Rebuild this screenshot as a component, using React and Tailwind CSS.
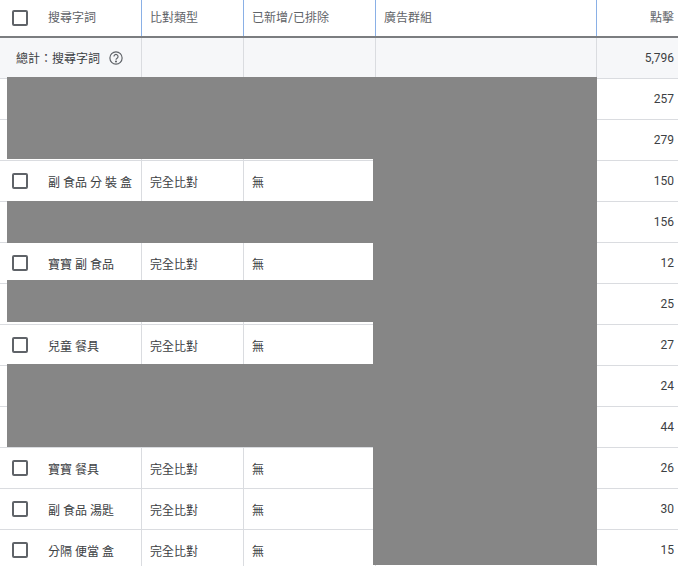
const rows = [
  { term: "", clicks: "257" },
  { term: "", clicks: "279" },
  { term: "副 食品 分 裝 盒", clicks: "150" },
  { term: "", clicks: "156" },
  { term: "寶寶 副 食品", clicks: "12" },
  { term: "", clicks: "25" },
  { term: "兒童 餐具", clicks: "27" },
  { term: "", clicks: "24" },
  { term: "", clicks: "44" },
  { term: "寶寶 餐具", clicks: "26" },
  { term: "副 食品 湯匙", clicks: "30" },
  { term: "分隔 便當 盒", clicks: "15" },
];

// grey blocks that hide parts of the table in the screenshot
const redactions = [
  "left-[7px] top-[77px] w-[590px] h-[82px]",
  "left-[7px] top-[201px] w-[590px] h-[42px]",
  "left-[7px] top-[280px] w-[590px] h-[42px]",
  "left-[7px] top-[364px] w-[590px] h-[83px]",
  "left-[373px] top-[77px] w-[224px] h-[488px]",
];

function Checkbox() {
  return <div className="w-4 h-4 rounded-[2px] border-2 border-[#5f6368] bg-white" />;
}

export default function App() {
  return (
    <div className="relative w-[678px] h-[566px] overflow-hidden bg-white text-xs text-[#3c4043] font-['Roboto','Noto_Sans_CJK_TC',sans-serif]">
      <div className="flex h-[38px] border-b-2 border-[#7b7d80] text-[#5f6368]">
        <div className="w-[142px] flex items-center pl-3 border-r border-[#8ab0e6]">
          <Checkbox />
          <span className="ml-5">搜尋字詞</span>
        </div>
        <div className="w-[102px] flex items-center pl-2 border-r border-[#8ab0e6]">比對類型</div>
        <div className="w-[132px] flex items-center pl-2 border-r border-[#8ab0e6]">已新增/已排除</div>
        <div className="w-[221px] flex items-center pl-2 border-r border-[#8ab0e6]">廣告群組</div>
        <div className="flex-1 flex items-center justify-end pr-1">點擊</div>
      </div>

      <div className="flex h-10 bg-[#f6f7f9]">
        <div className="w-[142px] flex items-center pl-4 border-r border-[#dadce0]">
          <span className="pt-[2px]">總計：搜尋字詞</span>
          <svg className="ml-[9px] w-[14px] h-[14px] text-[#5f6368]" viewBox="0 0 24 24" fill="none" stroke="currentColor" strokeWidth="2">
            <circle cx="12" cy="12" r="10.5" />
            <path d="M8.5 9.5a3.5 3.5 0 1 1 5.4 2.9c-1.2.8-1.9 1.3-1.9 2.8" />
            <circle cx="12" cy="18" r="0.8" fill="currentColor" />
          </svg>
        </div>
        <div className="w-[102px] border-r border-[#dadce0]" />
        <div className="w-[132px] border-r border-[#dadce0]" />
        <div className="w-[221px] border-r border-[#dadce0]" />
        <div className="flex-1 flex items-center justify-end pr-1">5,796</div>
      </div>

      {rows.map((row, i) => (
        <div key={i} className="flex h-[41px] border-t border-[#dadce0]">
          <div className="w-[142px] flex items-center pl-3 border-r border-[#dadce0]">
            <Checkbox />
            <span className="ml-5 pt-[3px]">{row.term}</span>
          </div>
          <div className="w-[102px] flex items-center pl-2 pt-[3px] border-r border-[#dadce0]">完全比對</div>
          <div className="w-[132px] flex items-center pl-2 pt-[3px] border-r border-[#dadce0]">無</div>
          <div className="w-[221px] border-r border-[#dadce0]" />
          <div className="flex-1 flex items-center justify-end pr-1">{row.clicks}</div>
        </div>
      ))}

      {redactions.map((pos) => (
        <div key={pos} className={`absolute bg-[#868686] ${pos}`} />
      ))}
    </div>
  );
}
